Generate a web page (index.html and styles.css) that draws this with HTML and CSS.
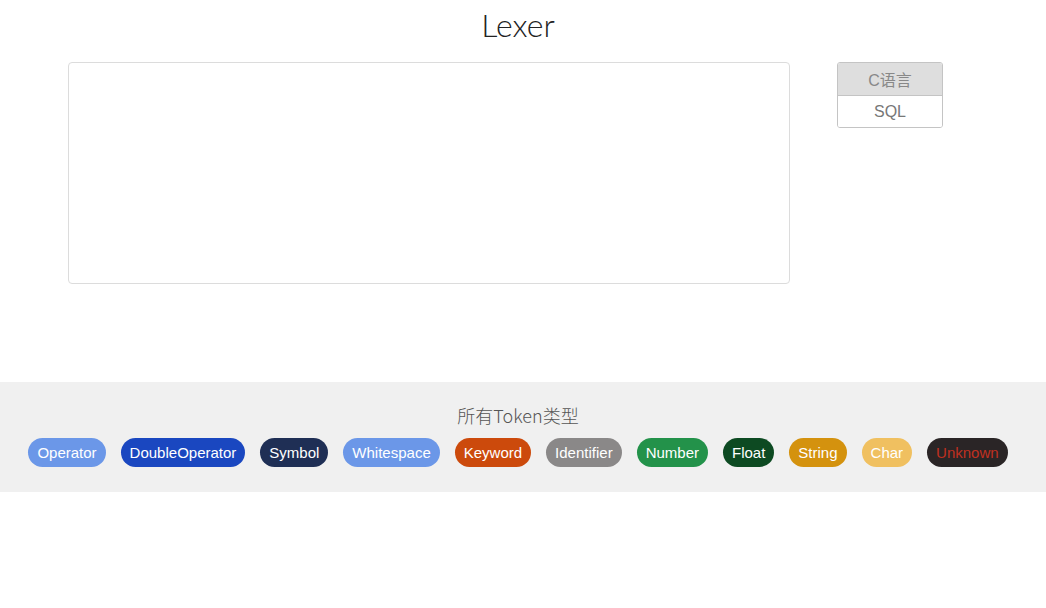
FILE: index.html
```html
<!DOCTYPE html>
<html>
<head>
<meta charset="utf-8">
<link rel="stylesheet" href="styles.css">
</head>
<body>
<h1 class="title">Lexer</h1>
<div class="editor-row">
  <textarea class="code"></textarea>
  <div class="lang-group">
    <button class="lang active">C语言</button>
    <button class="lang">SQL</button>
  </div>
</div>
<section class="tokens">
  <h2 class="tokens-title">所有Token类型</h2>
  <div class="badges">
    <span class="badge t-operator">Operator</span>
    <span class="badge t-double">DoubleOperator</span>
    <span class="badge t-symbol">Symbol</span>
    <span class="badge t-ws">Whitespace</span>
    <span class="badge t-keyword">Keyword</span>
    <span class="badge t-ident">Identifier</span>
    <span class="badge t-number">Number</span>
    <span class="badge t-float">Float</span>
    <span class="badge t-string">String</span>
    <span class="badge t-char">Char</span>
    <span class="badge t-unknown">Unknown</span>
  </div>
</section>
</body>
</html>
```
FILE: styles.css
```css
html, body {
  margin: 0;
  padding: 0;
  background: #fff;
  font-family: "Liberation Sans", Arial, "Noto Sans CJK SC", sans-serif;
}
.title {
  margin: 0;
  padding: 7px 10px 0 0;
  height: 36px;
  line-height: 36px;
  text-align: center;
  font-family: Lato, "Liberation Sans", sans-serif;
  font-weight: 300;
  font-size: 32px;
  color: #222;
}
.editor-row {
  display: flex;
  align-items: flex-start;
  padding: 19px 0 0 68px;
  height: 339px;
  box-sizing: border-box;
}
.code {
  width: 722px;
  height: 222px;
  box-sizing: border-box;
  border: 1px solid #dcdcdc;
  border-radius: 4px;
  resize: none;
  outline: none;
  margin: 0;
}
.lang-group {
  margin-left: 47px;
  width: 106px;
  box-sizing: border-box;
  display: flex;
  flex-direction: column;
  border: 1px solid #c4c4c4;
  border-radius: 3px;
  overflow: hidden;
}
.lang {
  height: 32px;
  border: none;
  background: #fff;
  color: #777;
  font-family: "Liberation Sans", "Noto Sans CJK SC", sans-serif;
  font-size: 16px;
  padding: 0;
  margin: 0;
}
.lang + .lang {
  border-top: 1px solid #c4c4c4;
}
.lang.active {
  background: #dedede;
  color: #888;
}
.tokens {
  background: #f0f0f0;
  height: 110px;
  box-sizing: border-box;
  padding-top: 20px;
}
.tokens-title {
  margin: 0;
  padding-right: 10px;
  text-align: center;
  font-family: "Noto Sans CJK SC", sans-serif;
  font-weight: 300;
  font-size: 18px;
  line-height: 26px;
  color: #555;
}
.badges {
  margin-top: 10px;
  display: flex;
  justify-content: center;
  gap: 15px;
  padding-right: 10px;
}
.badge {
  height: 29px;
  line-height: 29px;
  padding: 0 9px;
  border-radius: 15px;
  color: #fff;
  font-size: 15px;
}
.t-operator { background: #6b97e8; }
.t-double { background: #1a47c0; }
.t-symbol { background: #1f2f55; }
.t-ws { background: #6b97e8; }
.t-keyword { background: #cc4a0c; }
.t-ident { background: #8a8888; }
.t-number { background: #23924a; }
.t-float { background: #0d4a22; }
.t-string { background: #d4920e; }
.t-char { background: #f0c060; }
.t-unknown { background: #2a2526; color: #c03020; }
```
